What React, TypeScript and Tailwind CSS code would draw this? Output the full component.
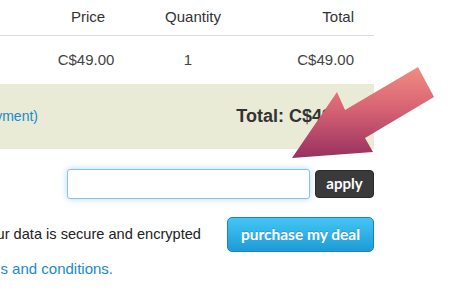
export default function App() {
  return (
    <div className="relative w-[474px] h-[294px] overflow-hidden bg-white font-['Liberation_Sans',Arial,sans-serif]">
      <div className="w-[374px]">
        {/* header */}
        <div className="grid grid-cols-[36px_100px_110px_1fr] h-[36px] items-center text-[15px] text-[#333] border-b border-[#dcdcdc]">
          <div />
          <div className="text-center pl-[4px]">Price</div>
          <div className="text-center pl-[4px]">Quantity</div>
          <div className="text-right pr-[20px]">Total</div>
        </div>
        {/* item row */}
        <div className="grid grid-cols-[36px_100px_110px_1fr] h-[48px] items-center text-[15px] text-[#444]">
          <div />
          <div className="text-center">C$49.00</div>
          <div className="text-center pr-[6px]">1</div>
          <div className="text-right pr-[20px]">C$49.00</div>
        </div>
        {/* total band */}
        <div className="h-[65px] bg-[#e9ebd6] flex items-center">
          <div className="w-[38px] flex justify-end whitespace-nowrap text-[14px] text-[#1a8acb]">
            (full payment)
          </div>
          <div className="flex-1 text-right pr-[17px] text-[18px] font-bold text-[#333]">Total: C$49.00</div>
        </div>
        {/* coupon */}
        <div className="flex items-center justify-end gap-[5px] mt-[20px] h-[30px]">
          <input
            type="text"
            className="w-[243px] h-[30px] rounded-[3px] border border-[#8cc3dd] bg-white shadow-[0_0_6px_rgba(82,168,236,0.45)] outline-none"
          />
          <button className="w-[59px] h-[28px] rounded-[4px] bg-[#3a3a3a] border border-[#2a2a2a] text-white text-[15px] font-bold font-['Lato',sans-serif] leading-none pb-[2px]">
            apply
          </button>
        </div>
        {/* purchase */}
        <div className="flex items-center mt-[18px] h-[35px]">
          <div className="w-[201px] flex justify-end whitespace-nowrap text-[14.6px] text-[#222]">
            Your data is secure and encrypted
          </div>
          <div className="flex-1" />
          <button className="w-[147px] h-[35px] rounded-[5px] border border-[#1986bf] bg-gradient-to-b from-[#43c6f4] to-[#1c9bd8] text-white text-[15.5px] font-bold font-['Lato',sans-serif] [text-shadow:0_-1px_0_rgba(0,0,0,0.15)]">
            purchase my deal
          </button>
        </div>
        {/* terms */}
        <div className="mt-[6px] w-[113px] flex justify-end whitespace-nowrap text-[15px] text-[#1a8acb]">
          I agree to the terms and conditions.
        </div>
      </div>
      <svg className="absolute left-0 top-0" width="474" height="294" viewBox="0 0 474 294">
        <defs>
          <linearGradient id="arrowGrad" x1="0" y1="67" x2="0" y2="158" gradientUnits="userSpaceOnUse">
            <stop offset="0" stopColor="#f08c82" />
            <stop offset="0.45" stopColor="#d86474" />
            <stop offset="1" stopColor="#98305f" />
          </linearGradient>
        </defs>
        <polygon
          points="292,158 337,92 345,110 418,67 434,97 365,138 373,152"
          fill="url(#arrowGrad)"
        />
      </svg>
    </div>
  )
}
